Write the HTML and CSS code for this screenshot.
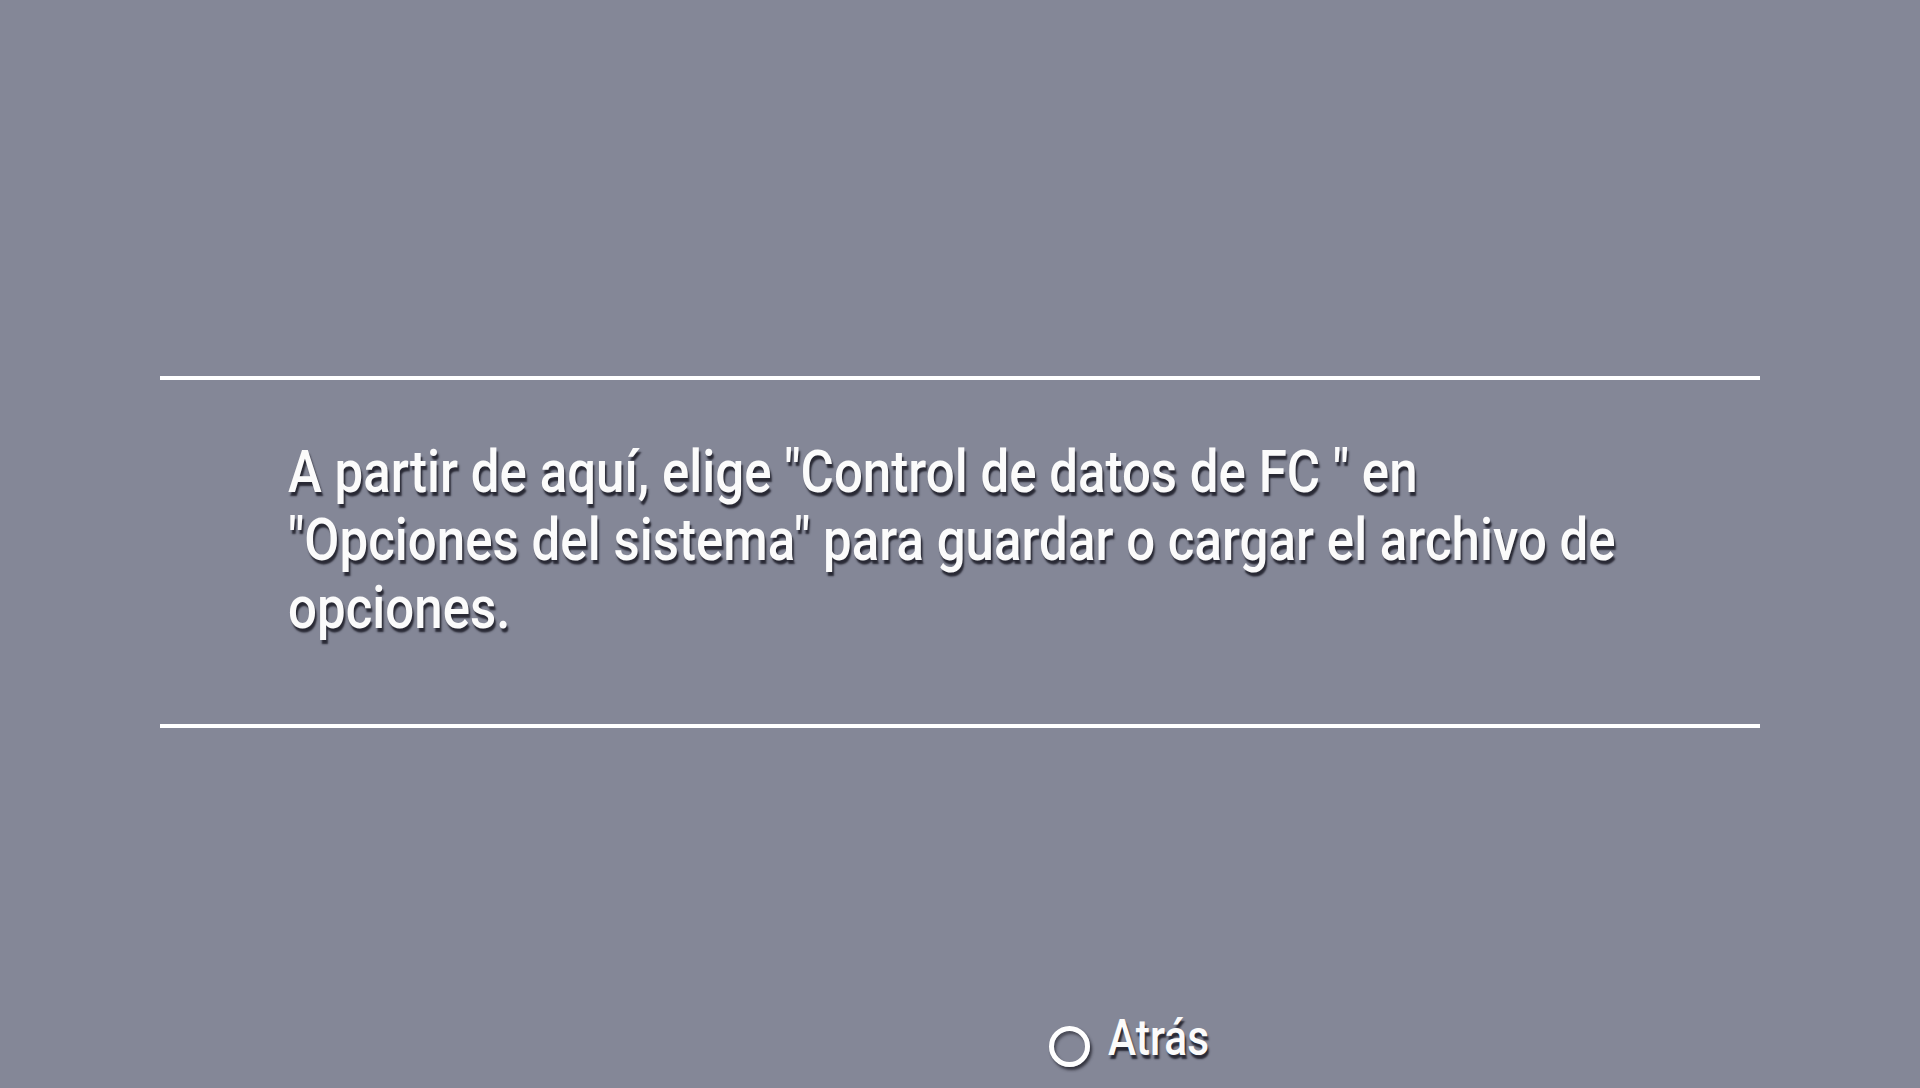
FILE: index.html
```html
<!DOCTYPE html>
<html lang="es">
<head>
<meta charset="utf-8">
<title>Opciones</title>
<link rel="stylesheet" href="styles.css">
</head>
<body>
<main class="screen">
  <hr class="rule">
  <div class="message">
    <div class="message-inner">
      <div class="line">A partir de aquí, elige "Control de datos de FC " en</div>
      <div class="line">"Opciones del sistema" para guardar o cargar el archivo de</div>
      <div class="line">opciones.</div>
    </div>
  </div>
  <hr class="rule">
  <footer class="footer">
    <span class="circle-btn"></span>
    <span class="footer-label">Atrás</span>
  </footer>
</main>
</body>
</html>
```

FILE: styles.css
```css
html, body {
  margin: 0;
  padding: 0;
}
body {
  width: 1920px;
  height: 1088px;
  overflow: hidden;
  background: #848797;
  font-family: Roboto, "Liberation Sans", sans-serif;
  color: #fbfbfb;
}
.screen {
  display: flex;
  flex-direction: column;
  padding-top: 376px;
}
.rule {
  margin: 0 160px;
  height: 4px;
  border: 0;
  background: #ffffff;
}
.message {
  margin: 58px 0 82px 288px;
  height: 204px;
}
.message-inner {
  transform: scaleX(0.851);
  transform-origin: left top;
  white-space: nowrap;
}
.line {
  font-size: 60px;
  font-weight: 500;
  line-height: 68px;
  text-shadow: 2px 4px 2px rgba(25, 25, 35, 0.85);
}
.footer {
  display: flex;
  align-items: center;
  margin: 280px 0 0 1049px;
  height: 60px;
}
.circle-btn {
  width: 31px;
  height: 31px;
  border: 5px solid #ffffff;
  border-radius: 50%;
  box-shadow: 2px 3px 3px rgba(25, 25, 35, 0.75), inset 2px 3px 3px rgba(25, 25, 35, 0.55);
  margin-top: 16px;
}
.footer-label {
  font-size: 50px;
  font-weight: 500;
  line-height: 60px;
  margin-left: 18px;
  display: inline-block;
  transform: scaleX(0.85);
  transform-origin: left center;
  text-shadow: 2px 4px 2px rgba(25, 25, 35, 0.85);
}
```
